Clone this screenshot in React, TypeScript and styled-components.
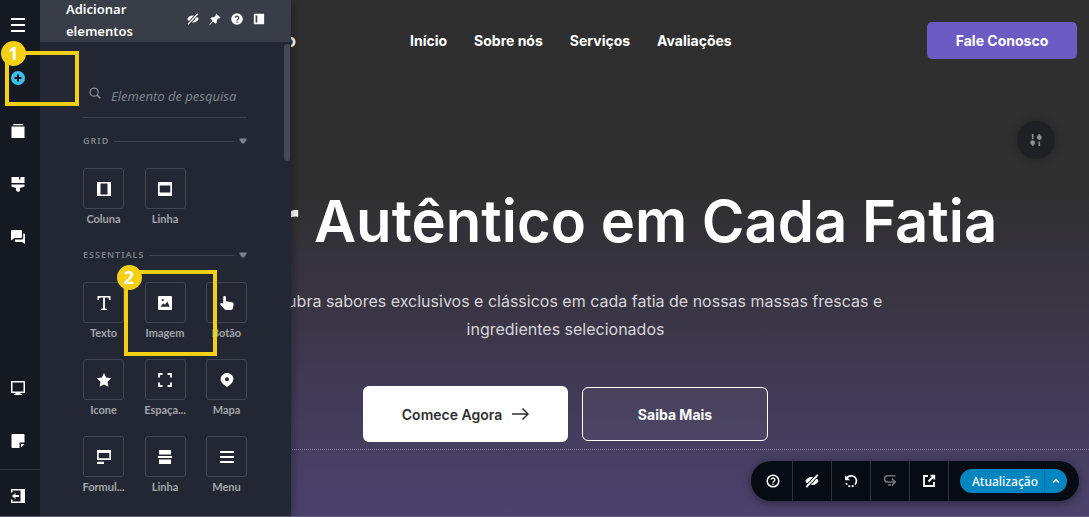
import React from "react";
import styled, { createGlobalStyle } from "styled-components";

const GlobalStyle = createGlobalStyle`
  *, *::before, *::after { box-sizing: border-box; }
  body { margin: 0; background: #2f2f2f; }
  button, input { font: inherit; color: inherit; border: 0; padding: 0; background: none; }
  button { cursor: pointer; }
  a { color: inherit; text-decoration: none; }
  h1, h2, h3, p { margin: 0; }
  svg { display: block; flex: none; }
`;

const uiFont = `"Noto Sans", "Open Sans", sans-serif`;
const siteFont = `Inter, "Liberation Sans", sans-serif`;

/* ---------- icons ---------- */

const shapes: Record<string, React.ReactNode> = {
  menu: <path d="M0 0h14v2H0zM0 6h14v2H0zM0 12h14v2H0z" />,
  add: (
    <>
      <circle cx="7" cy="7" r="7" />
      <path d="M7 3.500v7M3.500 7h7" stroke="#151922" strokeWidth="2" />
    </>
  ),
  pages: <path d="M2 0h10v1.200H2zM.5 2.500h13v11.500H.5z" />,
  paint: <path d="M.5 0H8v2.500h1.500V0h4v6H.5zM.5 7.500h13v2L9 11v3L7 15l-2-1.500V11L.5 9.500z" />,
  chat: (
    <path d="M1 0h9a1 1 0 0 1 1 1v6a1 1 0 0 1-1 1H3.500L0 10.500V1a1 1 0 0 1 1-1zM12.200 3.500H13a1 1 0 0 1 1 1v9.500L11 12H5a1 1 0 0 1-1-1V9.500h7a1.200 1.200 0 0 0 1.200-1.200z" />
  ),
  desktop: (
    <path fillRule="evenodd" d="M0 0h14v12H9.500v1H11v1H3v-1h1.500v-1H0zM1.500 1.500v9h11v-9z" />
  ),
  note: <path d="M1.500 0h11a1 1 0 0 1 1 1V8.500H8.500v5.500h-7a1 1 0 0 1-1-1V1a1 1 0 0 1 1-1zM10 10h3.500L10 13.500z" />,
  exit: (
    <path d="M0 0h14v14H0v-3.500h1.500v2H9.500v-11H1.500v2H0zM4.500 4v2.100H8v1.800H4.500V10L.8 7z" />
  ),
  hidden: (
    <>
      <path fillRule="evenodd" d="M7 3C3.500 3 1.300 5 .4 7 1.300 9 3.500 11 7 11s5.700-2 6.600-4C12.700 5 10.500 3 7 3zm0 2.200a1.800 1.800 0 1 1 0 3.600 1.800 1.800 0 0 1 0-3.600z" />
      <path d="M12.800.8 1.200 13.200" stroke="#171c28" strokeWidth="3.600" />
      <path d="M12.800.8 1.200 13.200" stroke="currentColor" strokeWidth="1.700" />
    </>
  ),
  pin: <path d="M8.500.5 13.500 5.500l-1.600.8-.7-.2-2.200 2.300.1 2.700-1.400 1.400-2.600-2.600-4 3.900-.8-.8 3.900-4L1.600 6.400 3 5l2.700.1L8 2.900l-.3-.7z" />,
  helpSolid: (
    <>
      <circle cx="7" cy="7" r="6.800" />
      <path d="M5 5.600a2 2 0 1 1 3.200 1.600C7.400 7.700 7 8 7 8.800" fill="none" stroke="#383d47" strokeWidth="1.500" />
      <path d="M6.200 9.800h1.600v1.600H6.200z" fill="#383d47" />
    </>
  ),
  dock: <path fillRule="evenodd" d="M1 1h12v12H1zm2 2v8h2V3z" />,
  search: (
    <>
      <circle cx="6" cy="6" r="4.700" fill="none" stroke="currentColor" strokeWidth="1.500" />
      <path d="m9.400 9.400 3.600 3.600" stroke="currentColor" strokeWidth="1.800" />
    </>
  ),
  column: <path fillRule="evenodd" d="M0 0h14v14H0zm3.500 1.500v11h7v-11z" />,
  row: <path fillRule="evenodd" d="M0 0h14v14H0zm1.700 3.500v7h10.600v-7z" />,
  text: <path d="M.5 0h13v4h-1.300c-.2-1.700-.8-2.500-2.300-2.500H7.900v10c0 1 .3 1.200 2.100 1.300V14H4v-1.200c1.800-.1 2.100-.3 2.100-1.300v-10H4.100c-1.500 0-2.100.8-2.300 2.500H.5z" />,
  image: (
    <>
      <path d="M1 0h12a1 1 0 0 1 1 1v12a1 1 0 0 1-1 1H1a1 1 0 0 1-1-1V1a1 1 0 0 1 1-1z" />
      <path d="m2.500 10.800 2.800-3.600 1.600 1.600 2.400-3.300 2.400 5.300z" fill="#222733" />
      <circle cx="4.800" cy="4" r="1.100" fill="#222733" />
    </>
  ),
  hand: (
    <path d="M3.200 1.400a1.400 1.400 0 0 1 2.800 0v3.800l6 1c1.200.2 1.800 1 1.600 2.100L13 12c-.2 1.200-1 2-2.300 2H6.400c-.9 0-1.500-.3-2.100-.9L.5 8.700c-.6-.7 0-2 1-1.800l1.700.5z" />
  ),
  star: <path d="m7 0 2.200 4.600 4.800.6-3.500 3.500.9 5L7 11.400l-4.400 2.300.9-5L0 5.200l4.800-.6z" />,
  expand: (
    <path d="M1 4.500V1h3.500M9.500 1H13v3.500M13 9.500V13H9.500M4.500 13H1V9.500" fill="none" stroke="currentColor" strokeWidth="1.800" />
  ),
  map: (
    <path fillRule="evenodd" d="M7 0a6.200 6.200 0 0 1 6.400 6.200c0 3-2.600 5-6.400 7.800C3.200 11.200.6 9.200.6 6.200A6.200 6.200 0 0 1 7 0zm0 4.200a2 2 0 1 0 0 4 2 2 0 0 0 0-4z" />
  ),
  form: <path fillRule="evenodd" d="M0 0h14v10H0zm1.700 3v5.200h10.600V3zM0 11.800h7V14H0z" />,
  rows: <path d="M1 0h12v4.500H1zM0 6h14v2H0zM1 9.500h12V14H1z" />,
  lines: <path d="M0 1h14v2H0zM0 6h14v2H0zM0 11h14v2H0z" />,
  sliders: (
    <>
      <path d="M3.700 1v5M10.300 8.500v4.500M3.700 9v4M10.300 1v4" stroke="currentColor" strokeWidth="1.600" />
      <circle cx="3.700" cy="9.600" r="2.400" />
      <circle cx="10.300" cy="4.600" r="2.400" />
    </>
  ),
  help: (
    <>
      <circle cx="7" cy="7" r="5.800" fill="none" stroke="currentColor" strokeWidth="1.500" />
      <path d="M5.200 5.800a1.800 1.800 0 1 1 2.900 1.400C7.300 7.700 7 7.900 7 8.600" fill="none" stroke="currentColor" strokeWidth="1.400" />
      <path d="M6.300 9.400h1.400v1.400H6.300z" />
    </>
  ),
  undo: (
    <>
      <path d="M2.600 4.600A5.200 5.200 0 0 1 12.400 7a5.200 5.200 0 0 1-1.500 3.700" fill="none" stroke="currentColor" strokeWidth="1.700" />
      <path d="M9.600 11.800A5.200 5.200 0 0 1 2 8.600" fill="none" stroke="currentColor" strokeWidth="1.700" strokeDasharray="2 1.400" />
      <path d="M1 1.200v5h5z" />
    </>
  ),
  redo: (
    <path d="M12.500 1.800H4.700a3 3 0 0 0 0 6.200H12M8.800 4.600 12.200 8l-3.400 3.600M5 11h3" fill="none" stroke="currentColor" strokeWidth="1.600" />
  ),
  external: (
    <path d="M6 2H2v10h10V8M8.500 1.700h3.800v3.800M12 2 6.500 7.500" fill="none" stroke="currentColor" strokeWidth="1.800" />
  ),
  chevron: <path d="m4 8.500 3-3 3 3" fill="none" stroke="currentColor" strokeWidth="1.500" />,
  arrow: <path d="M0 7h16M10.500 1.500 16 7l-5.500 5.500" fill="none" stroke="currentColor" strokeWidth="1.500" />,
  caret: <path d="M.5 4.500h7v1.500L5 9.500H3L.5 6z" />,
};

const viewBoxes: Record<string, string> = {
  arrow: "0 0 17 14",
  caret: "0 0 8 14",
  paint: "0 0 14 15",
};

function Icon({ name, width = 14, height = 14 }: { name: string; width?: number; height?: number }) {
  return (
    <svg width={width} height={height} viewBox={viewBoxes[name] ?? "0 0 14 14"} fill="currentColor" aria-hidden="true">
      {shapes[name]}
    </svg>
  );
}

/* ---------- shell ---------- */

const Shell = styled.div`
  display: flex;
  min-height: 100vh;
  border-bottom: 1px solid #5d5973;
  overflow: hidden;
`;

const Rail = styled.nav`
  position: relative;
  z-index: 3;
  flex: none;
  width: 40px;
  display: flex;
  flex-direction: column;
  gap: 3px;
  background: #151922;
  color: #fff;
`;

const RailSlot = styled.div<{ $push?: boolean }>`
  position: relative;
  display: flex;
  margin-top: ${(p) => (p.$push ? "auto" : 0)};
`;

const RailFooter = styled.div`
  height: 47px;
  padding-top: 1px;
  border-top: 1px solid #333845;
`;

const RailButton = styled.button<{ $active?: boolean }>`
  display: grid;
  place-items: center;
  width: 36px;
  height: 50px;
  color: ${(p) => (p.$active ? "#3cc0ea" : "#fff")};
`;

const Highlight = styled.div<{ $x: number; $y: number; $w: number; $h: number }>`
  position: absolute;
  z-index: 4;
  left: ${(p) => p.$x}px;
  top: ${(p) => p.$y}px;
  width: ${(p) => p.$w}px;
  height: ${(p) => p.$h}px;
  border: 4px solid #f4d014;
  pointer-events: none;
`;

const HighlightBadge = styled.span<{ $x: number; $y: number }>`
  position: absolute;
  left: ${(p) => p.$x}px;
  top: ${(p) => p.$y}px;
  width: 25px;
  height: 25px;
  border-radius: 50%;
  background: #f4d014;
  color: #fff;
  font: 700 18px/24px "Open Sans", sans-serif;
  text-align: center;
`;

/* ---------- element panel ---------- */

const Panel = styled.aside`
  position: absolute;
  z-index: 2;
  inset: 0 auto 0 0;
  width: 251px;
  background: #222733;
  box-shadow: 0 0 10px rgba(0, 0, 0, 0.4);
  font-family: ${uiFont};
`;

const PanelHeader = styled.header`
  display: flex;
  align-items: flex-end;
  justify-content: space-between;
  height: 42px;
  padding: 0 25px 0 26px;
  background: #383d47;
  color: #fff;
`;

const PanelTitle = styled.h2`
  width: 90px;
  font-size: 13px;
  font-weight: 600;
  line-height: 22px;
`;

const PanelTools = styled.div`
  display: flex;
  gap: 8px;
  padding-bottom: 16px;
`;

const ToolButton = styled.button`
  display: grid;
  place-items: center;
  width: 14px;
  height: 14px;
`;

const PanelBody = styled.div`
  padding: 32px 44px 0 43px;
`;

const ScrollThumb = styled.div`
  position: absolute;
  top: 44px;
  right: 1px;
  width: 6px;
  height: 117px;
  border-radius: 3px;
  background: #434955;
`;

const Search = styled.label`
  display: flex;
  align-items: center;
  gap: 10px;
  height: 44px;
  padding-left: 6px;
  border-bottom: 1px solid #3d424d;
  color: #8b9099;
  svg { margin-bottom: 6px; }
`;

const SearchInput = styled.input`
  min-width: 0;
  width: 100%;
  height: 24px;
  outline: 0;
  font-size: 13px;
  font-style: italic;
  &::placeholder { color: #7e838d; opacity: 1; }
`;

const SectionTitle = styled.h3`
  display: flex;
  align-items: center;
  gap: 5px;
  margin: 16px 0 20px;
  color: #7c818a;
  font-size: 9px;
  font-weight: 600;
  line-height: 14px;
  letter-spacing: 1px;
  &:not(:first-of-type) { margin-top: 22px; }
`;

const Rule = styled.span`
  flex: 1;
  height: 1px;
  background: #3f444e;
`;

const Tiles = styled.div`
  display: grid;
  grid-template-columns: repeat(3, 41px);
  justify-content: space-between;
  row-gap: 19px;
`;

const TileSlot = styled.div`
  position: relative;
  display: flex;
  justify-content: center;
`;

const Tile = styled.button`
  display: flex;
  flex-direction: column;
  align-items: center;
  gap: 3px;
  width: 41px;
  color: #a2a5ab;
  font-family: Lato, sans-serif;
  font-size: 11px;
  font-weight: 700;
  line-height: 14px;
  white-space: nowrap;
`;

const TileIcon = styled.span`
  display: grid;
  place-items: center;
  width: 41px;
  height: 41px;
  border: 1px solid #41454f;
  border-radius: 3px;
  color: #fff;
`;

/* ---------- site canvas ---------- */

const Canvas = styled.main`
  position: relative;
  flex: 1;
  min-width: 0;
  background: linear-gradient(#2f2f2f 0%, #2f2f2f 36%, #3a3646 62%, #413b56 76%, #4b426d 100%);
  font-family: ${siteFont};
  color: #fff;
`;

const SiteHeader = styled.header`
  display: flex;
  align-items: center;
  padding: 22px 12px 0 0;
  font-size: 14px;
  font-weight: 700;
`;

const Brand = styled.a`
  width: 256px;
  text-align: right;
  font-size: 18px;
`;

const SiteNav = styled.nav`
  display: flex;
  gap: 27px;
  margin-left: 114px;
`;

const ContactButton = styled.button`
  width: 150px;
  height: 37px;
  margin-left: auto;
  border-radius: 5px;
  background: #6c5bc3;
`;

const Hero = styled.section`
  display: flex;
  flex-direction: column;
  align-items: center;
  padding: 122px 0 7px 2px;
  border-bottom: 1px dotted #86819a;
  text-align: center;
`;

const Headline = styled.h1`
  font-size: 58px;
  font-weight: 600;
  line-height: 80px;
  white-space: nowrap;
`;

const Lead = styled.p`
  max-width: 640px;
  margin: 26px 0 43px;
  color: #d6d4da;
  font-size: 16px;
  line-height: 28px;
`;

const Actions = styled.div`
  display: flex;
  align-items: center;
  gap: 14px;
  font-size: 14px;
`;

const PrimaryAction = styled.button`
  display: flex;
  align-items: center;
  justify-content: center;
  gap: 10px;
  width: 205px;
  height: 56px;
  border-radius: 6px;
  background: #fff;
  color: #2f2f2f;
  font-weight: 600;
`;

const SecondaryAction = styled.button`
  width: 186px;
  height: 54px;
  border: 1px solid #fff;
  border-radius: 6px;
  background: rgba(255, 255, 255, 0.04);
  font-weight: 700;
`;

const SettingsButton = styled.button`
  position: absolute;
  top: 121px;
  right: 34px;
  display: grid;
  place-items: center;
  width: 38px;
  height: 38px;
  border-radius: 50%;
  background: #1f2023;
  box-shadow: 0 0 8px rgba(0, 0, 0, 0.3);
  color: #8f8f90;
`;

const Toolbar = styled.div`
  position: absolute;
  right: 10px;
  bottom: 15px;
  display: flex;
  align-items: center;
  height: 40px;
  padding: 0 12px 0 3px;
  border-radius: 20px;
  background: #070b14;
  box-shadow: 0 2px 8px rgba(0, 0, 0, 0.4);
  font-family: ${uiFont};
`;

const ToolbarButton = styled.button<{ $muted?: boolean }>`
  display: grid;
  place-items: center;
  width: 39px;
  height: 40px;
  border-right: 1px solid #2c303a;
  color: ${(p) => (p.$muted ? "#70747c" : "#fff")};
`;

const UpdateGroup = styled.div`
  display: flex;
  height: 24px;
  margin-left: 11px;
  border-radius: 12px;
  background: #0085bf;
  overflow: hidden;
  font-size: 12px;
  font-weight: 500;
`;

const UpdateButton = styled.button`
  width: 84px;
  padding-left: 6px;
`;

const UpdateMenu = styled.button`
  display: grid;
  place-items: center;
  width: 23px;
  border-left: 1px solid #056b9c;
`;

const elementTiles = [
  ["text", "Texto"],
  ["image", "Imagem"],
  ["hand", "Botão"],
  ["star", "Icone"],
  ["expand", "Espaça..."],
  ["map", "Mapa"],
  ["form", "Formul..."],
  ["rows", "Linha"],
  ["lines", "Menu"],
];

function ElementTile({ icon, label }: { icon: string; label: string }) {
  return (
    <TileSlot>
      <Tile>
        <TileIcon><Icon name={icon} /></TileIcon>
        {label}
      </Tile>
      {icon === "image" && (
        <Highlight $x={-21} $y={-12} $w={93} $h={86}>
          <HighlightBadge $x={-11} $y={-9}>2</HighlightBadge>
        </Highlight>
      )}
    </TileSlot>
  );
}

export default function App() {
  return (
    <>
      <GlobalStyle />
      <Shell>
        <Rail>
          <RailSlot><RailButton aria-label="Menu"><Icon name="menu" /></RailButton></RailSlot>
          <RailSlot>
            <RailButton $active aria-label="Adicionar"><Icon name="add" /></RailButton>
            <Highlight $x={5} $y={-2} $w={74} $h={55}>
              <HighlightBadge $x={-8} $y={-14}>1</HighlightBadge>
            </Highlight>
          </RailSlot>
          <RailSlot><RailButton aria-label="Páginas"><Icon name="pages" /></RailButton></RailSlot>
          <RailSlot><RailButton aria-label="Tema"><Icon name="paint" height={15} /></RailButton></RailSlot>
          <RailSlot><RailButton aria-label="Comentários"><Icon name="chat" /></RailButton></RailSlot>
          <RailSlot $push><RailButton aria-label="Dispositivo"><Icon name="desktop" /></RailButton></RailSlot>
          <RailSlot><RailButton aria-label="Notas"><Icon name="note" /></RailButton></RailSlot>
          <RailFooter><RailButton aria-label="Sair"><Icon name="exit" /></RailButton></RailFooter>
        </Rail>

        <Canvas>
          <Panel>
            <PanelHeader>
              <PanelTitle>Adicionar elementos</PanelTitle>
              <PanelTools>
                <ToolButton aria-label="Ocultar"><Icon name="hidden" width={12} height={12} /></ToolButton>
                <ToolButton aria-label="Fixar"><Icon name="pin" width={12} height={12} /></ToolButton>
                <ToolButton aria-label="Ajuda"><Icon name="helpSolid" width={12} height={12} /></ToolButton>
                <ToolButton aria-label="Encaixar"><Icon name="dock" width={12} height={12} /></ToolButton>
              </PanelTools>
            </PanelHeader>
            <PanelBody>
              <Search>
                <Icon name="search" width={12} height={12} />
                <SearchInput type="text" placeholder="Elemento de pesquisa" aria-label="Elemento de pesquisa" />
              </Search>
              <SectionTitle>GRID <Rule /><Icon name="caret" width={8} /></SectionTitle>
              <Tiles>
                <ElementTile icon="column" label="Coluna" />
                <ElementTile icon="row" label="Linha" />
              </Tiles>
              <SectionTitle>ESSENTIALS <Rule /><Icon name="caret" width={8} /></SectionTitle>
              <Tiles>
                {elementTiles.map(([icon, label]) => (
                  <ElementTile key={icon} icon={icon} label={label} />
                ))}
              </Tiles>
            </PanelBody>
            <ScrollThumb />
          </Panel>

          <SiteHeader>
            <Brand href="#">Logo</Brand>
            <SiteNav>
              <a href="#inicio">Início</a>
              <a href="#sobre">Sobre nós</a>
              <a href="#servicos">Serviços</a>
              <a href="#avaliacoes">Avaliações</a>
            </SiteNav>
            <ContactButton>Fale Conosco</ContactButton>
          </SiteHeader>
          <Hero>
            <Headline>Sabor Autêntico em Cada Fatia</Headline>
            <Lead>Descubra sabores exclusivos e clássicos em cada fatia de nossas massas frescas e ingredientes selecionados</Lead>
            <Actions>
              <PrimaryAction>Comece Agora <Icon name="arrow" width={17} /></PrimaryAction>
              <SecondaryAction>Saiba Mais</SecondaryAction>
            </Actions>
          </Hero>
          <SettingsButton aria-label="Configurações"><Icon name="sliders" /></SettingsButton>
          <Toolbar>
            <ToolbarButton aria-label="Ajuda"><Icon name="help" /></ToolbarButton>
            <ToolbarButton aria-label="Ocultar"><Icon name="hidden" /></ToolbarButton>
            <ToolbarButton aria-label="Desfazer"><Icon name="undo" /></ToolbarButton>
            <ToolbarButton $muted aria-label="Refazer"><Icon name="redo" /></ToolbarButton>
            <ToolbarButton aria-label="Visualizar"><Icon name="external" /></ToolbarButton>
            <UpdateGroup>
              <UpdateButton>Atualização</UpdateButton>
              <UpdateMenu aria-label="Mais opções"><Icon name="chevron" /></UpdateMenu>
            </UpdateGroup>
          </Toolbar>
        </Canvas>
      </Shell>
    </>
  );
}
